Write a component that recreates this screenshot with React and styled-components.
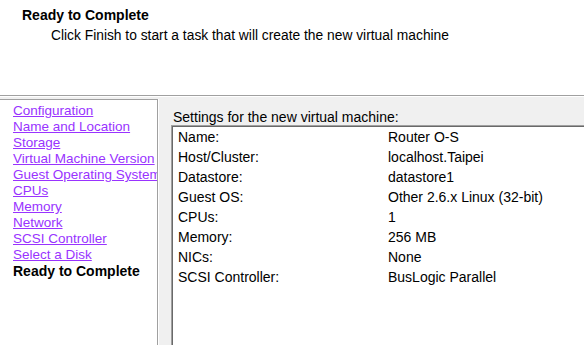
import React from 'react';
import styled, { createGlobalStyle } from 'styled-components';

const GlobalStyle = createGlobalStyle`
  html, body {
    margin: 0;
    padding: 0;
    background: #ffffff;
  }
  body {
    font-family: "Liberation Sans", Arial, sans-serif;
    font-size: 14px;
    color: #000;
  }
`;

const Window = styled.div`
  width: 584px;
  height: 345px;
  display: flex;
  flex-direction: column;
  overflow: hidden;
`;

const Header = styled.header`
  height: 96px;
  flex-shrink: 0;
  box-sizing: border-box;
  padding: 7px 0 0 22px;
  background: #ffffff;
  border-bottom: 1px solid #a0a0a0;
`;

const Title = styled.h1`
  margin: 0;
  font-size: 14px;
  font-weight: bold;
  line-height: 16px;
`;

const Subtitle = styled.p`
  margin: 5px 0 0 29px;
  font-size: 13.8px;
  line-height: 16px;
`;

const Body = styled.div`
  flex: 1;
  display: flex;
  background: #f0f0f0;
  padding-top: 2px;
  border-top: 1px solid #ffffff;
  overflow: hidden;
`;

const Steps = styled.nav`
  width: 158px;
  flex-shrink: 0;
  box-sizing: border-box;
  background: #ffffff;
  border-top: 1px solid #a0a0a0;
  border-right: 1px solid #a0a0a0;
  padding: 3px 0 0 13px;
  overflow: hidden;
  white-space: nowrap;
`;

const Step = styled.a`
  display: block;
  line-height: 16px;
  font-size: ${p => (p.$current ? '14px' : '13.5px')};
  color: ${p => (p.$current ? '#000' : '#9933ff')};
  font-weight: ${p => (p.$current ? 'bold' : 'normal')};
  text-decoration: ${p => (p.$current ? 'none' : 'underline')};
  cursor: pointer;
`;

const Content = styled.section`
  flex: 1;
  display: flex;
  flex-direction: column;
  padding: 10px 0 0 12px;
  margin-right: -12px;
  border-left: 1px solid #ffffff;
`;

const Caption = styled.div`
  line-height: 16px;
  padding-left: 2px;
`;

const Summary = styled.div`
  flex: 1;
  background: #ffffff;
  border-top: 1px solid #a0a0a0;
  border-left: 1px solid #a0a0a0;
  box-shadow: inset 1px 1px 0 #696969;
  padding: 1px 0 0 6px;
`;

const Row = styled.div`
  display: flex;
  line-height: 20px;
`;

const Label = styled.span`
  width: 210px;
  flex-shrink: 0;
`;

const Value = styled.span``;

const steps = [
  'Configuration',
  'Name and Location',
  'Storage',
  'Virtual Machine Version',
  'Guest Operating System',
  'CPUs',
  'Memory',
  'Network',
  'SCSI Controller',
  'Select a Disk',
  'Ready to Complete',
];

const settings = [
  ['Name:', 'Router O-S'],
  ['Host/Cluster:', 'localhost.Taipei'],
  ['Datastore:', 'datastore1'],
  ['Guest OS:', 'Other 2.6.x Linux (32-bit)'],
  ['CPUs:', '1'],
  ['Memory:', '256 MB'],
  ['NICs:', 'None'],
  ['SCSI Controller:', 'BusLogic Parallel'],
];

const App = () => {
  return (
    <Window>
      <GlobalStyle />
      <Header>
        <Title>Ready to Complete</Title>
        <Subtitle>Click Finish to start a task that will create the new virtual machine</Subtitle>
      </Header>
      <Body>
        <Steps>
          {steps.map((s, i) => (
            <Step key={s} $current={i === steps.length - 1}>{s}</Step>
          ))}
        </Steps>
        <Content>
          <Caption>Settings for the new virtual machine:</Caption>
          <Summary>
            {settings.map(([k, v]) => (
              <Row key={k}>
                <Label>{k}</Label>
                <Value>{v}</Value>
              </Row>
            ))}
          </Summary>
        </Content>
      </Body>
    </Window>
  );
};

export default App;
